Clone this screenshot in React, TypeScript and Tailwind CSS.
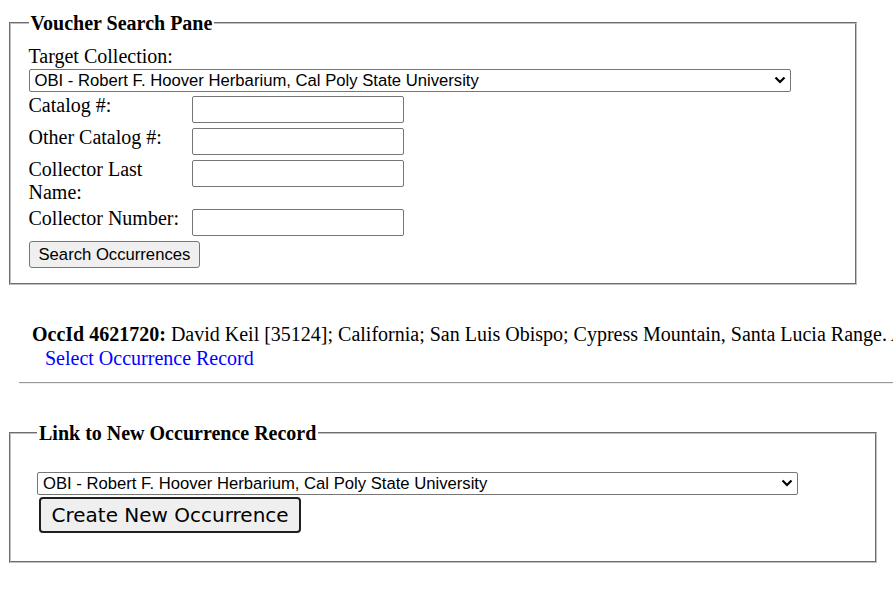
import React from "react";

function Chevron() {
  return (
    <svg
      width="12"
      height="8"
      viewBox="0 0 12 8"
      className="pointer-events-none absolute right-[5px] top-[8px]"
    >
      <path d="M1.5 1.5 L6 6 L10.5 1.5" fill="none" stroke="black" strokeWidth="2.2" />
    </svg>
  );
}

function CollectionSelect({ wide }: { wide: boolean }) {
  return (
    <div className={wide ? "relative h-[23px] w-[762px]" : "relative h-[23px] w-[761px]"}>
      <select className="h-full w-full appearance-none rounded-[2px] border border-[#767676] bg-white pl-[5px] font-['Liberation_Sans',Arial,sans-serif] text-[16.67px] leading-[normal] text-black outline-none">
        <option>OBI - Robert F. Hoover Herbarium, Cal Poly State University</option>
      </select>
      <Chevron />
    </div>
  );
}

function Row({ label }: { label: string }) {
  return (
    <div className="flex items-start">
      <div className="w-[163px] shrink-0">{label}</div>
      <input
        type="text"
        className="mt-[2.2px] h-[27px] w-[212px] rounded-[2px] border border-[#767676] bg-white px-[3px] font-['Liberation_Sans',Arial,sans-serif] text-[16.67px] outline-none"
      />
    </div>
  );
}

export default function App() {
  return (
    <div className="h-[597px] w-[893px] overflow-hidden bg-white font-['Liberation_Serif','Times_New_Roman',serif] text-[20px] leading-[normal] text-black">
      <fieldset className="ml-[9px] mt-[11.5px] w-[848px] border-2 border-[#c0c0c0] [--tw-border-style:groove] [border-style:groove] pb-[15px] pl-[17.5px] pr-[17.5px] pt-[10.5px]">
        <legend className="px-[2px] font-bold">Voucher Search Pane</legend>
        <div>Target Collection:</div>
        <CollectionSelect wide={true} />
        <div className="mt-[2.5px] flex flex-col gap-[3px]">
          <Row label="Catalog #:" />
          <Row label="Other Catalog #:" />
          <Row label="Collector Last Name:" />
          <Row label="Collector Number:" />
        </div>
        <button className="mt-[5.3px] block h-[27px] rounded-[3px] border border-[#767676] bg-[#efefef] px-[9px] font-['Liberation_Sans',Arial,sans-serif] text-[16.67px] leading-[normal] text-black">
          Search Occurrences
        </button>
      </fieldset>

      <div className="ml-[32px] mt-[38px] whitespace-nowrap">
        <b>OccId 4621720:</b> David Keil [35124]; California; San Luis Obispo; Cypress Mountain, Santa Lucia Range. Along ridge road
      </div>
      <div className="ml-[45px] mt-[0.6px]">
        <a className="cursor-pointer text-[#0000ff]">Select Occurrence Record</a>
      </div>
      <div className="ml-[19px] mt-[12.5px] border-b border-t border-b-[#eeeeee] border-t-[#9a9a9a]" />

      <fieldset className="ml-[9px] mt-[37.5px] w-[868px] border-2 border-[#c0c0c0] [--tw-border-style:groove] [border-style:groove] pb-[28px] pl-[26px] pr-[26px] pt-[25.8px]">
        <legend className="px-[2px] font-bold">Link to New Occurrence Record</legend>
        <CollectionSelect wide={false} />
        <button className="ml-[2px] mt-[3.5px] block h-[36px] rounded-[4px] border-2 border-[#1f1f1f] bg-[#efefef] px-[10.5px] font-['DejaVu_Sans',Verdana,sans-serif] text-[20px] leading-[normal] text-black">
          Create New Occurrence
        </button>
      </fieldset>
    </div>
  );
}
